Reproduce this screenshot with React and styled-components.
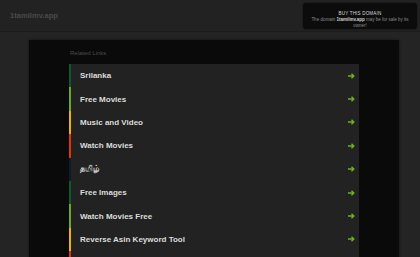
import React from 'react'
import styled, { createGlobalStyle } from 'styled-components'

const links = [
  'Srilanka',
  'Free Movies',
  'Music and Video',
  'Watch Movies',
  'தமிழ்',
  'Free Images',
  'Watch Movies Free',
  'Reverse Asin Keyword Tool',
  'Watch Free Movies',
]

const barColors = ['#0d5a2c', '#6aac1c', '#f1b400', '#e53400', '#0b1d2a']

function Arrow() {
  return (
    <svg width="7" height="6" viewBox="0 0 7 6">
      <path d="M0 3 H5.5 M3.5 0.8 L5.8 3 L3.5 5.2" stroke="#6cb31f" strokeWidth="1.4" fill="none" />
    </svg>
  )
}

function App() {
  return (
    <Page>
      <GlobalStyle />
      <Header>
        <Domain>1tamilmv.app</Domain>
        <SaleBox>
          <SaleTitle>BUY THIS DOMAIN</SaleTitle>
          <SaleText>
            The domain <b>1tamilmv.app</b> may be for sale by its owner!
          </SaleText>
        </SaleBox>
      </Header>
      <Body>
        <Panel>
          <Label>Related Links</Label>
          <List>
            {links.map((l, i) => (
              <Row key={l} $bar={barColors[i % barColors.length]}>
                <span>{l}</span>
                <Arrow />
              </Row>
            ))}
          </List>
        </Panel>
      </Body>
    </Page>
  )
}

export default App

const GlobalStyle = createGlobalStyle`
  html, body {
    margin: 0;
    background: #242424;
    overflow: hidden;
  }
  body {
    font-family: "Liberation Sans", Arial, sans-serif;
  }
`

const Page = styled.div`
  width: 420px;
  height: 257px;
  overflow: hidden;
  background: #242424;
`

const Header = styled.div`
  height: 31px;
  background: #222222;
  border-bottom: 1px solid #1c1c1c;
  display: flex;
  align-items: flex-start;
  justify-content: space-between;
  padding: 0 3px 0 10px;
`

const Domain = styled.div`
  margin-top: 11px;
  font-size: 7.6px;
  font-weight: 700;
  color: #4a4a4a;
`

const SaleBox = styled.div`
  margin-top: 3px;
  width: 114px;
  height: 26px;
  box-sizing: border-box;
  background: #0c0c0c;
  border-radius: 3px;
  box-shadow: 0 0 2px rgba(0, 0, 0, 0.6);
  padding: 8px 4px 0;
  text-align: center;
`

const SaleTitle = styled.div`
  font-size: 4.5px;
  line-height: 6px;
  color: #d8d8d8;
  letter-spacing: 0.2px;
`

const SaleText = styled.div`
  font-size: 4.5px;
  line-height: 6px;
  color: #8a8a8a;
  b {
    color: #d0d0d0;
  }
`

const Body = styled.div`
  padding: 8px 21px 0 29px;
`

const Panel = styled.div`
  background: #0a0a0a;
  height: 230px;
  padding: 9px 40px 0 40px;
  box-shadow: 0 0 3px rgba(0, 0, 0, 0.5);
`

const Label = styled.div`
  font-size: 6px;
  color: #4a4a4a;
  height: 15px;
  padding-left: 1px;
  line-height: 8px;
`

const List = styled.div`
  background: #222222;
  display: flex;
  flex-direction: column;
`

const Row = styled.div`
  height: 23.4px;
  box-sizing: border-box;
  border-left: 2px solid ${(p) => p.$bar};
  display: flex;
  align-items: center;
  justify-content: space-between;
  padding: 0 4px 0 9px;
  font-size: 8px;
  font-weight: 700;
  color: #dcdcdc;
`
